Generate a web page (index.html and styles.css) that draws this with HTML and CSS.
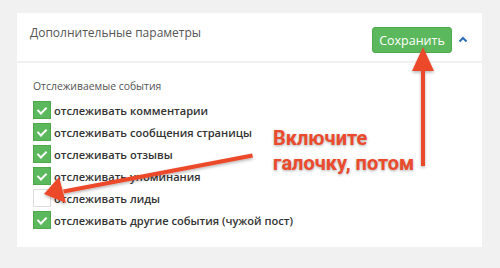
FILE: index.html
```html
<!DOCTYPE html>
<html>
<head>
  <title>Дополнительные параметры</title>
  <link rel="stylesheet" href="styles.css">
</head>
<body>
  <div class="panel">
    <div class="panel-header">
      <h3 class="panel-title">Дополнительные параметры</h3>
      <button class="btn-save" type="button">Сохранить</button>
      <span class="collapse-toggle">
        <svg width="10" height="7" viewBox="0 0 10 7"><path d="M1.5 5.5 L5 2 L8.5 5.5" fill="none" stroke="#2b6cb8" stroke-width="2"/></svg>
      </span>
    </div>

    <div class="panel-body">
      <div class="group-label">Отслеживаемые события</div>
      <label class="check-row"><span class="check on"></span>отслеживать комментарии</label>
      <label class="check-row"><span class="check on"></span>отслеживать сообщения страницы</label>
      <label class="check-row"><span class="check on"></span>отслеживать отзывы</label>
      <label class="check-row"><span class="check on"></span>отслеживать упоминания</label>
      <label class="check-row"><span class="check"></span>отслеживать лиды</label>
      <label class="check-row"><span class="check on"></span>отслеживать другие события (чужой пост)</label>
    </div>
  </div>

  <!-- annotation drawn on top of the screenshot -->
  <div class="note">Включите<br>галочку, потом</div>
  <svg class="arrows" width="500" height="268" viewBox="0 0 500 268">
    <defs>
      <filter id="shadow" x="-20%" y="-20%" width="140%" height="140%">
        <feDropShadow dx="0" dy="1.5" stdDeviation="1.5" flood-color="#000" flood-opacity="0.3"/>
      </filter>
    </defs>
    <g fill="#ec4a2c" stroke="none" filter="url(#shadow)">
      <rect x="421" y="66" width="4" height="100"/>
      <polygon points="423,47 434,71 412,71"/>
      <polygon points="252,153.5 253,157.5 64,193.5 63,189.5"/>
      <polygon points="44,194 59,177 66,203"/>
    </g>
  </svg>
</body>
</html>
```

FILE: styles.css
```css
body {
  margin: 0;
  padding: 13px 18px 21px 17px;
  background-color: #f1f1f1;
  font-family: "Open Sans", "Liberation Sans", sans-serif;
  position: relative;
}

.panel {
  background-color: #fff;
  height: 234px;
}

.panel-header {
  display: flex;
  align-items: flex-start;
  height: 48px;
  padding: 0 14px 0 13px;
  border-bottom: 2px solid #f0f0f0;
}

.panel-title {
  margin: 11px 0 0 0;
  font-size: 12px;
  line-height: 18px;
  font-weight: normal;
  color: #555;
  flex: 1;
}

.btn-save {
  margin-top: 14px;
  width: 80px;
  height: 26px;
  border: 1px solid #52a84d;
  border-radius: 3px;
  background-color: #5cb85c;
  color: #fff;
  font-family: inherit;
  font-size: 12.5px;
  padding: 0;
}

.collapse-toggle {
  margin: 23px 0 0 6px;
  width: 10px;
  line-height: 0;
}

.panel-body {
  padding: 15px 16px 0 16px;
}

.group-label {
  font-size: 10.4px;
  line-height: 16px;
  color: #555;
  margin-bottom: 5px;
}

/* checkbox rows */
.check-row {
  display: flex;
  align-items: center;
  height: 22px;
  font-size: 11.1px;
  font-weight: 600;
  color: #333;
}

.check {
  box-sizing: border-box;
  width: 18px;
  height: 18px;
  margin-right: 3px;
  border: 1px solid #dcdcdc;
  background-color: #fff;
  position: relative;
}

.check.on {
  border-color: #4fa84a;
  background-color: #5cb85c;
}

.check.on::after {
  content: "";
  position: absolute;
  left: 5px;
  top: 3px;
  width: 4px;
  height: 7px;
  border-right: 2px solid #fff;
  border-bottom: 2px solid #fff;
  transform: rotate(45deg);
}

.note {
  position: absolute;
  left: 273px;
  top: 126px;
  font-family: Roboto, "Liberation Sans", sans-serif;
  font-weight: bold;
  font-size: 20px;
  line-height: 25px;
  color: #ec4a2c;
  text-shadow: 0 1px 3px rgba(0, 0, 0, 0.35);
}

.arrows {
  position: absolute;
  left: 0;
  top: 0;
}
```
